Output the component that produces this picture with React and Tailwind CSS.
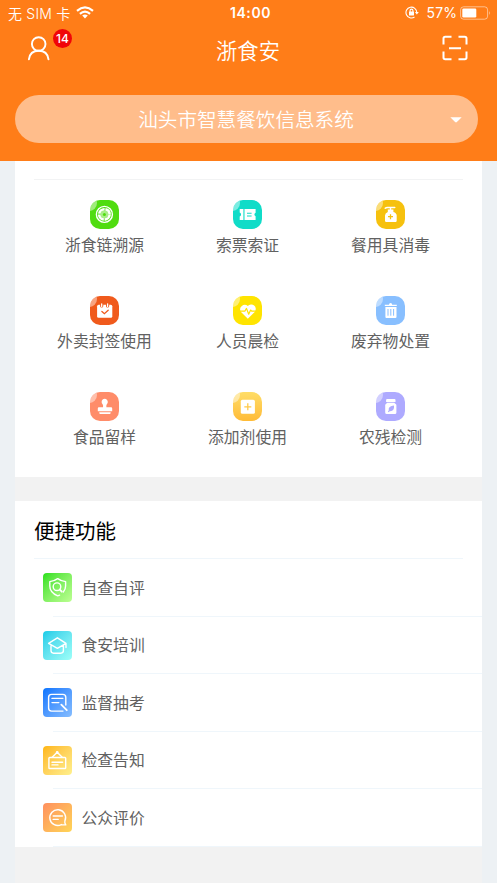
import React from 'react';

const services = [
    {
        name: '浙食链溯源',
        tile: 'bg-[#50dc10]',
        icon: (
            <g fill="none" stroke="#fff">
                <circle cx="14.4" cy="14.4" r="8" strokeWidth="1.4" />
                <circle cx="14.4" cy="14.4" r="5.2" strokeWidth="2.6" strokeDasharray="7.37 0.8" strokeDashoffset="-0.4" />
                <circle cx="14.4" cy="14.4" r="4" fill="#fff" fillOpacity="0.5" stroke="none" />
                <circle cx="14.4" cy="14.4" r="1.5" fill="#50dc10" stroke="none" />
            </g>
        ),
    },
    {
        name: '索票索证',
        tile: 'bg-[#10dcc8]',
        icon: (
            <g>
                <path fill="#fff" d="M6.7 9H10.4V20H6.7V16.4A2 2 0 0 0 6.7 12.6ZM11.5 9H22.6V12.8A1.8 1.8 0 0 0 22.6 16.2V20H11.5Z" />
                <path stroke="#10dcc8" strokeWidth="1.1" d="M14 13.2h4.6M14 16h4.6" />
            </g>
        ),
    },
    {
        name: '餐用具消毒',
        tile: 'bg-[#f6c10e]',
        icon: (
            <g>
                <path fill="none" stroke="#fff" strokeWidth="1.4" strokeLinecap="round" d="M9.2 8.3Q10 7.5 11.5 7.5H18.8M14.5 7.5V10" />
                <path fill="#fff" d="M11.8 9.6h5.6v2.4q3.3 1 3.3 3.6v5.2q0 1.2-1.2 1.2h-9.3q-1.2 0-1.2-1.2v-5.2q0-2.6 2.8-3.6z" />
                <path stroke="#f6c10e" strokeWidth="1.3" d="M12 16.7h5M14.5 14.2v5" />
            </g>
        ),
    },
    {
        name: '外卖封签使用',
        tile: 'bg-[#f05a1c]',
        icon: (
            <g fill="none" strokeLinecap="round">
                <rect x="7.1" y="8.7" width="15.2" height="13" rx="1.5" fill="#fff" />
                <path stroke="#f05a1c" strokeWidth="3.2" d="M11.7 8.3v1.7M17.6 8.3v1.7" />
                <path stroke="#fff" strokeWidth="1.3" d="M11.7 7.8v2.6M17.6 7.8v2.6" />
                <path stroke="#f05a1c" strokeWidth="1.3" d="M11.9 15.4l2.5 2.3 3.8-3.4" />
            </g>
        ),
    },
    {
        name: '人员晨检',
        tile: 'bg-[#ffe400]',
        icon: (
            <g>
                <path fill="#fff" d="M14.8 22.7L8 15.9A4.5 4.5 0 0 1 14.8 10.1A4.5 4.5 0 0 1 21.7 15.9Z" />
                <path fill="none" stroke="#ffe400" strokeWidth="1.2" strokeLinejoin="round" d="M6.5 15.2H11.8L13.5 12.4L15.7 18.2L17.6 14L18.7 15.2H23" />
            </g>
        ),
    },
    {
        name: '废弃物处置',
        tile: 'bg-[#88bfff]',
        icon: (
            <g>
                <path fill="#fff" d="M8.8 8.7h4.2q0-1.6 1.6-1.6t1.6 1.6h4.6v1.4h-12zM9.4 11h11.1v10q0 1.1-1.1 1.1h-8.9q-1.1 0-1.1-1.1z" />
                <path stroke="#88bfff" strokeWidth="1" d="M12 13v6.7M14.8 13v6.7M17.6 13v6.7" />
            </g>
        ),
    },
    {
        name: '食品留样',
        tile: 'bg-[#ff8c69]',
        icon: (
            <path fill="#fff" d="M11.6 10a3.1 3.1 0 1 1 5.2 2.2q-.7.8-.4 3.1h4.7q1.1 0 1.1 1.1v2.9H7.8v-2.9q0-1.1 1.1-1.1H13q.4-2.3-.4-3.1A3.1 3.1 0 0 1 11.6 10zM9.3 20.2h11.3v.8q0 .9-.9.9h-9.5q-.9 0-.9-.9z" />
        ),
    },
    {
        name: '添加剂使用',
        tile: 'bg-gradient-to-b from-[#ffdd66] to-[#ffbb36]',
        icon: (
            <g>
                <rect x="7.8" y="7.8" width="14.1" height="14" rx="1.6" fill="#fff" />
                <path stroke="#ffca4a" strokeWidth="1.3" d="M11.3 14.8h7M14.8 11.3v7" />
            </g>
        ),
    },
    {
        name: '农残检测',
        tile: 'bg-[#aeaaff]',
        icon: (
            <g>
                <path fill="#fff" d="M11.1 7h7.4q1 0 1 1v1.9h-9.4V8q0-1 1-1zM11.3 10.7h6.9l1.8 1.6q.4.4.4 1v7.2q0 1.5-1.5 1.5h-8.2q-1.5 0-1.5-1.5v-7.2q0-.6.4-1z" />
                <path fill="#aeaaff" d="M18 13.6q.6 6-4.3 5.7l-1.2 1-.6-.6 .8-1.2q-.6-4.6 5.3-4.9z" />
            </g>
        ),
    },
];

const shortcuts = [
    {
        name: '自查自评',
        tile: 'bg-gradient-to-br from-[#20e010] to-[#bcff92]',
        icon: (
            <>
                <path d="M16.6 22.1L14.7 22.8Q6.8 19.7 6.8 13V8.6Q11 8.2 14.7 5.6Q18.3 8.2 22.6 8.6V13Q22.6 16.4 20.3 19" />
                <circle cx="14" cy="13.7" r="3.8" />
                <path strokeWidth="1.8" d="M16.8 16.6l2 2.1" />
            </>
        ),
    },
    {
        name: '食安培训',
        tile: 'bg-gradient-to-br from-[#0acce8] to-[#9cfff8]',
        icon: (
            <path d="M5.6 12.4L14.4 6.8L23 12.4L14.4 17.4ZM8 14.6V19.6Q8 22.2 10.6 22.2H17.8Q20.4 22.2 20.4 19.6V14.6M23 12.4V16.6" />
        ),
    },
    {
        name: '监督抽考',
        tile: 'bg-gradient-to-br from-[#0074ff] to-[#86bdff]',
        icon: (
            <>
                <path d="M20 23.1H8.6Q5.6 23.1 5.6 20.1V9.4Q5.6 6.4 8.6 6.4H19.8Q22.8 6.4 22.8 9.4V17" />
                <path d="M9 10.4H19.8M9 14.6H15.8" />
                <path strokeWidth="1.8" d="M18.3 16.6L23.8 22.2" />
            </>
        ),
    },
    {
        name: '检查告知',
        tile: 'bg-gradient-to-br from-[#ffb604] to-[#fff08c]',
        icon: (
            <>
                <rect x="5.9" y="11.5" width="16.8" height="11" rx="0.8" />
                <path d="M9.2 11.3L14.2 6.2L19.2 11.3M9 16.2H19.6M9 18.9H15" />
                <circle cx="14.2" cy="6.4" r="0.7" fill="#fff" />
            </>
        ),
    },
    {
        name: '公众评价',
        tile: 'bg-gradient-to-br from-[#ff8f5e] to-[#ffd556]',
        icon: (
            <>
                <path d="M18.4 21.6A7.9 7.9 0 1 1 21.9 17.9Q21.3 20 22.8 21.9H18.4" />
                <path d="M10.2 13H19.4M10.2 16.4H15.2" />
            </>
        ),
    },
];

const StatusBar = () => (
    <div className="flex h-[26px] items-center px-2 text-[14px]">
        <div className="flex flex-1 items-center">
            <span className="font-[350] tracking-[0.2px]">无 SIM 卡</span>
            <svg className="ml-[6px] -mt-px" width="18" height="13" viewBox="0 0 18 13" fill="none" stroke="#fff" strokeWidth="2.2">
                <path d="M1 4.8Q9-2 17 4.8M3.9 7.8Q9 3.4 14.1 7.8" />
                <path d="M6.2 9.6Q9 7.3 11.8 9.6L9 12.5Z" fill="#fff" stroke="none" />
            </svg>
        </div>
        <span className="relative left-[2px] -top-px font-semibold tracking-[0.6px]">14:00</span>
        <div className="-mt-px flex flex-1 items-center justify-end">
            <svg width="14" height="13" viewBox="0 0 14 13" fill="none" stroke="#fff" strokeWidth="1.1">
                <path d="M9.5 11A5.4 5.4 0 1 1 11.8 6.5" />
                <path d="M9.9 6h3.9l-1.95 2.4z" fill="#fff" stroke="none" />
                <rect x="4" y="5.5" width="5" height="3.9" rx="0.5" fill="#fff" stroke="none" />
                <path d="M5.1 6V4.5a1.4 1.4 0 0 1 2.8 0V6" />
            </svg>
            <span className="ml-2 tracking-[0.1px]">57%</span>
            <svg className="ml-[3px] -mr-[3px]" width="32" height="14" viewBox="0 0 32 14">
                <rect x="0.6" y="0.8" width="27" height="12.4" rx="3" fill="none" stroke="#fff" strokeOpacity="0.5" />
                <rect x="2.3" y="2.5" width="14" height="9" rx="1.3" fill="#fff" />
                <path d="M29.3 5Q31 7 29.3 9Z" fill="#fff" fillOpacity="0.6" />
            </svg>
        </div>
    </div>
);

const Header = () => (
    <header className="h-[161px] bg-[#ff7d18] text-white">
        <StatusBar />
        <div className="flex h-[69px] items-start justify-between pl-[27px] pr-[29px]">
            <div className="relative mt-[9px] w-[81px]">
                <svg width="24" height="26" viewBox="0 0 24 26" fill="none" stroke="#fff" strokeWidth="1.9" strokeLinecap="round">
                    <circle cx="11.7" cy="9" r="6.8" />
                    <path d="M1.900 24.300Q3 15.800 11.700 15.800T21.500 24.300" />
                </svg>
                <span className="absolute left-[26px] -top-[6px] flex h-[19px] w-[19px] items-center justify-center rounded-full bg-[#f00508] text-[12px] font-medium">14</span>
            </div>
            <h1 className="mt-[9px] text-[21.3px] font-[350] leading-[32px]">浙食安</h1>
            <div className="mt-[9px] flex w-[80px] justify-end">
                <svg width="26" height="26" viewBox="0 0 26 26" fill="none" stroke="#fff" strokeWidth="2">
                    <path d="M1.5 9.5V3.5Q1.5 1.8 3.2 1.8H9.5M16.5 1.8H22.8Q24.5 1.8 24.5 3.5V9.5M24.5 16.5V22.5Q24.5 24.2 22.8 24.2H16.5M9.5 24.2H3.2Q1.5 24.2 1.5 22.5V16.5M7 13.2H19" />
                </svg>
            </div>
        </div>
        <button className="ml-[15px] flex h-12 w-[463px] items-center rounded-full bg-[#ffbd8b] pl-[27px] pr-4">
            <span className="flex-1 pt-px text-[19.6px] font-[350] leading-[28px]">汕头市智慧餐饮信息系统</span>
            <svg className="mt-px" width="12" height="6" viewBox="0 0 12 6" fill="#fff">
                <path d="M0.3 0.3H11.7L6.9 5Q6 5.8 5.1 5Z" />
            </svg>
        </button>
    </header>
);

const App = () => {
    return (
        <div className="flex h-[883px] w-[497px] flex-col overflow-hidden bg-[#edf1f4] font-['Inter','Noto_Sans_CJK_SC',sans-serif]">
            <Header />
            <main className="mx-[15px] w-[467px] flex-1 bg-[#f2f2f2]">
                <section className="h-[316px] bg-white pt-[18px]">
                    <div className="mx-[19px] border-t border-[#f2f3f4]" />
                    <div className="ml-[18px] mt-5 grid w-[429px] grid-cols-3">
                        {services.map((item) => (
                            <div key={item.name} className="flex h-24 flex-col items-center">
                                <div className={`relative h-[29px] w-[29px] overflow-hidden rounded-[10px] ${item.tile}`}>
                                    {/* glossy corner */}
                                    <span className="absolute -left-[9px] -top-[5px] h-4 w-4 rounded-full bg-white/45" />
                                    <svg className="relative" width="29" height="29" viewBox="0 0 29 29">{item.icon}</svg>
                                </div>
                                <span className="mt-[5px] text-[15.8px] leading-6 text-[#616161]">{item.name}</span>
                            </div>
                        ))}
                    </div>
                </section>

                <section className="mt-6 h-[346px] bg-white">
                    <h2 className="flex h-[57px] items-center pl-[19px] pt-[5px] text-[20.5px] text-black">便捷功能</h2>
                    <div className="mx-[19px] border-t border-[#eff6fb]" />
                    {shortcuts.map((item) => (
                        <div key={item.name} className="h-[57.5px]">
                            <div className="flex h-[56.5px] items-center pl-[27.5px] pt-px">
                                <div className={`h-[29px] w-[29px] rounded-[4px] ${item.tile}`}>
                                    <svg width="29" height="29" viewBox="0 0 29 29" fill="none" stroke="#fff" strokeWidth="1.4" strokeLinecap="round" strokeLinejoin="round">
                                        {item.icon}
                                    </svg>
                                </div>
                                <span className="ml-[10px] pt-[2px] text-[15.8px] leading-6 text-[#616161]">{item.name}</span>
                            </div>
                            <div className="ml-[38px] border-t border-[#eff6fb]" />
                        </div>
                    ))}
                </section>
            </main>
        </div>
    );
};

export default App;
